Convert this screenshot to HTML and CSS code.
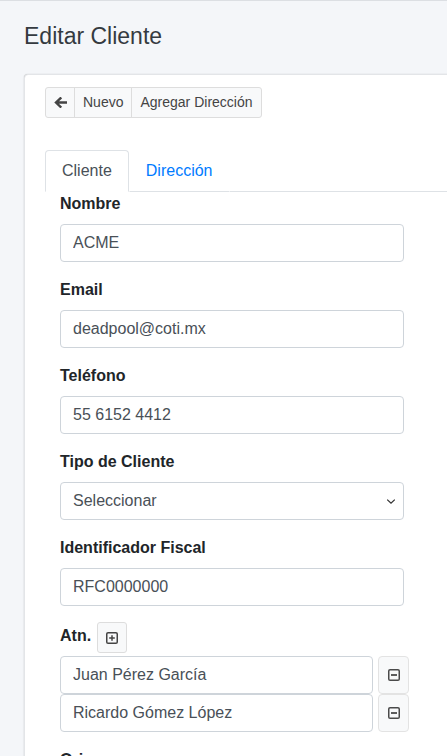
FILE: index.html
```html
<!DOCTYPE html>
<html lang="es">
<head>
<meta charset="utf-8">
<title>Editar Cliente</title>
<link rel="stylesheet" href="styles.css">
</head>
<body>
<div class="wrapper">
  <header class="content-header">
    <h1 class="page-title">Editar Cliente</h1>
  </header>
  <section class="card">
    <div class="card-header">
      <div class="btn-group">
        <button class="btn btn-sm" type="button" aria-label="Regresar">
          <svg class="icon-arrow" width="13" height="11" viewBox="0 0 13 11" aria-hidden="true">
            <path d="M12 5.5H2.6M6.4 1.3L2 5.5L6.4 9.7" fill="none" stroke="#444" stroke-width="2.4" stroke-linecap="square" stroke-linejoin="miter"/>
          </svg>
        </button>
        <button class="btn btn-sm" type="button">Nuevo</button>
        <button class="btn btn-sm" type="button">Agregar Dirección</button>
      </div>
    </div>
    <div class="card-body">
      <ul class="nav-tabs">
        <li class="nav-item"><a class="nav-link active">Cliente</a></li>
        <li class="nav-item"><a class="nav-link">Dirección</a></li>
        <li class="nav-fill"></li>
      </ul>
      <div class="tab-content">
        <div class="form-group">
          <label class="form-label">Nombre</label>
          <input class="form-control" type="text" value="ACME">
        </div>
        <div class="form-group">
          <label class="form-label">Email</label>
          <input class="form-control" type="text" value="deadpool@coti.mx">
        </div>
        <div class="form-group">
          <label class="form-label">Teléfono</label>
          <input class="form-control" type="text" value="55 6152 4412">
        </div>
        <div class="form-group">
          <label class="form-label">Tipo de Cliente</label>
          <select class="form-control form-select">
            <option>Seleccionar</option>
          </select>
        </div>
        <div class="form-group">
          <label class="form-label">Identificador Fiscal</label>
          <input class="form-control" type="text" value="RFC0000000">
        </div>
        <div class="form-group">
          <div class="atn-head">
            <label class="form-label atn-label">Atn.</label>
            <button class="btn btn-sm btn-icon" type="button" aria-label="Agregar">
              <svg width="12" height="12" viewBox="0 0 12 12" aria-hidden="true">
                <rect x="0.75" y="0.75" width="10.5" height="10.5" rx="1.3" fill="none" stroke="#444" stroke-width="1.5"/>
                <path d="M3.2 6H8.8M6 3.2V8.8" stroke="#444" stroke-width="1.5"/>
              </svg>
            </button>
          </div>
          <div class="atn-row">
            <input class="form-control" type="text" value="Juan Pérez García">
            <button class="btn btn-side" type="button" aria-label="Quitar">
              <svg width="12" height="12" viewBox="0 0 12 12" aria-hidden="true">
                <rect x="0.75" y="0.75" width="10.5" height="10.5" rx="1.3" fill="none" stroke="#4a4a4a" stroke-width="1.5"/>
                <path d="M3 6H9" stroke="#4a4a4a" stroke-width="1.8"/>
              </svg>
            </button>
          </div>
          <div class="atn-row">
            <input class="form-control" type="text" value="Ricardo Gómez López">
            <button class="btn btn-side" type="button" aria-label="Quitar">
              <svg width="12" height="12" viewBox="0 0 12 12" aria-hidden="true">
                <rect x="0.75" y="0.75" width="10.5" height="10.5" rx="1.3" fill="none" stroke="#4a4a4a" stroke-width="1.5"/>
                <path d="M3 6H9" stroke="#4a4a4a" stroke-width="1.8"/>
              </svg>
            </button>
          </div>
        </div>
        <div class="form-group">
          <label class="form-label">Origen</label>
        </div>
      </div>
    </div>
  </section>
</div>
</body>
</html>
```

FILE: styles.css
```css
html, body {
  margin: 0;
  padding: 0;
  overflow: hidden;
}

body {
  background: #f4f6f9;
  border-top: 1px solid #dcdfe3;
  font-family: "Liberation Sans", Arial, sans-serif;
  font-size: 16px;
  line-height: 1.5;
  color: #212529;
  height: 755px;
}

.wrapper {
  padding: 0 0 0 24px;
}

.content-header {
  padding-top: 21px;
}

.page-title {
  margin: 0;
  font-size: 23px;
  font-weight: 400;
  line-height: 28px;
  color: #343a40;
}

.card {
  margin-top: 24px;
  margin-right: -60px;
  background: #fff;
  border-radius: 4px;
  box-shadow: 0 0 1px rgba(0, 0, 0, 0.25), 0 1px 2px rgba(0, 0, 0, 0.08);
  border: 1px solid #e3e5e8;
}

.card-header {
  padding: 12px 20px;
}

.btn-group {
  display: inline-flex;
}

.btn {
  font-family: inherit;
  background: #f8f9fa;
  border: 1px solid #dddddd;
  color: #444;
  cursor: pointer;
  margin: 0;
}

.btn-sm {
  font-size: 14px;
  line-height: 21px;
  padding: 4px 8px;
  border-radius: 3px;
}

.btn-group .btn {
  border-radius: 0;
}

.btn-group .btn + .btn {
  margin-left: -1px;
}

.btn-group .btn:first-child {
  border-radius: 3px 0 0 3px;
  display: inline-flex;
  align-items: center;
  justify-content: center;
  width: 30px;
  padding: 0;
}

.btn-group .btn:last-child {
  border-radius: 0 3px 3px 0;
}

.card-body {
  padding: 20px 0 0 20px;
}

.nav-tabs {
  display: flex;
  list-style: none;
  margin: 0;
  padding: 0;
}

.nav-link {
  display: block;
  padding: 8px 16px;
  border: 1px solid transparent;
  border-top-left-radius: 4px;
  border-top-right-radius: 4px;
  color: #007bff;
  text-decoration: none;
  line-height: 24px;
  border-bottom: 1px solid #dee2e6;
}

.nav-link.active {
  color: #495057;
  background: #fff;
  border-color: #dee2e6 #dee2e6 #fff;
}

.nav-fill {
  flex: 1;
  border-bottom: 1px solid #dee2e6;
}

.tab-content {
  padding: 0 15px;
  width: 349px;
}

.form-group {
  margin-bottom: 16px;
}

.form-label {
  display: inline-block;
  font-weight: 700;
  margin-bottom: 8px;
}

.form-control {
  display: block;
  box-sizing: border-box;
  width: 344px;
  height: 38px;
  padding: 6px 12px;
  font-family: inherit;
  font-size: 16px;
  line-height: 24px;
  color: #495057;
  background: #fff;
  border: 1px solid #ced4da;
  border-radius: 4px;
  margin: 0;
}

.form-select {
  appearance: none;
  -webkit-appearance: none;
  padding-right: 28px;
  background-image: url("data:image/svg+xml,%3Csvg xmlns='http://www.w3.org/2000/svg' width='10' height='7' viewBox='0 0 10 7'%3E%3Cpath d='M1.2 1.6L5 5.2L8.8 1.6' fill='none' stroke='%23333' stroke-width='1.3'/%3E%3C/svg%3E");
  background-repeat: no-repeat;
  background-position: right 7px center;
  background-size: 10px 7px;
}

.atn-head {
  display: flex;
  align-items: flex-start;
  gap: 6px;
  margin-bottom: 3px;
}

.atn-label {
  margin: 2px 0 0 0;
}

.btn-icon {
  display: inline-flex;
  align-items: center;
  justify-content: center;
  width: 30px;
  height: 31px;
  padding: 0;
}

.atn-row {
  display: flex;
  gap: 5px;
  width: 349px;
}

.atn-row .form-control {
  flex: 1;
  width: auto;
}

.btn-side {
  display: flex;
  align-items: center;
  justify-content: center;
  width: 31px;
  height: 38px;
  padding: 0;
  border-color: #e3e3e3;
  border-radius: 4px;
}
```
